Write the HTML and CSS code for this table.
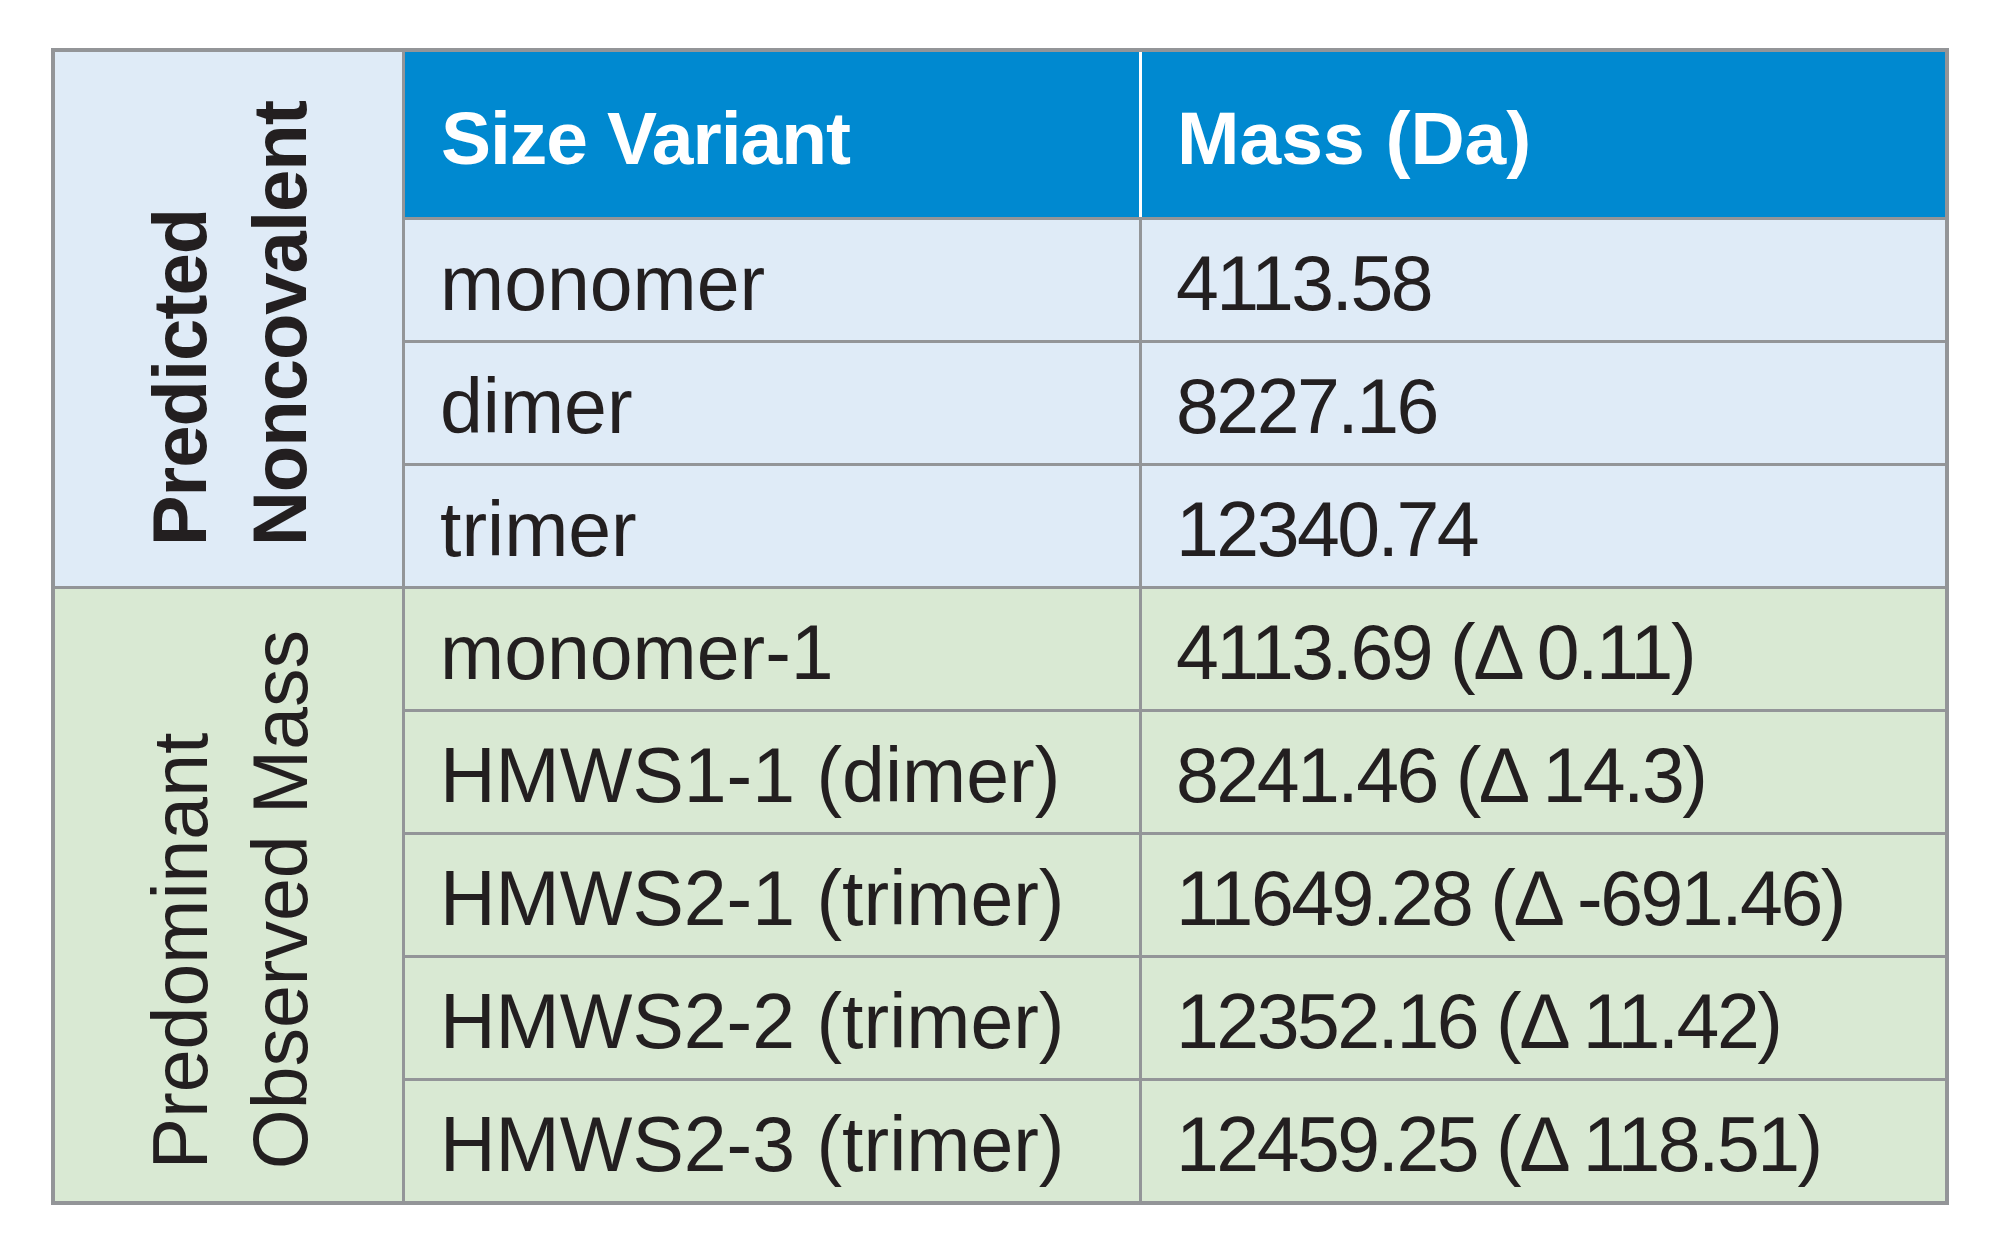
FILE: index.html
```html
<!DOCTYPE html>
<html lang="en">
<head>
<meta charset="utf-8">
<title>Size Variants</title>
<link rel="stylesheet" href="styles.css">
</head>
<body>
<div class="table">
  <div class="group group-pred"><div class="vlabel bold">Predicted<br>Noncovalent</div></div>
  <div class="group group-obs"><div class="vlabel">Predominant<br>Observed Mass</div></div>

  <div class="hcell">Size Variant</div>
  <div class="hcell hcell-mass">Mass (Da)</div>

  <div class="cell blue">monomer</div>
  <div class="cell blue num">4113.58</div>
  <div class="cell blue">dimer</div>
  <div class="cell blue num">8227.16</div>
  <div class="cell blue">trimer</div>
  <div class="cell blue num">12340.74</div>

  <div class="cell green">monomer-1</div>
  <div class="cell green num">4113.69 (Δ 0.11)</div>
  <div class="cell green">HMWS1-1 (dimer)</div>
  <div class="cell green num">8241.46 (Δ 14.3)</div>
  <div class="cell green">HMWS2-1 (trimer)</div>
  <div class="cell green num">11649.28 (Δ -691.46)</div>
  <div class="cell green">HMWS2-2 (trimer)</div>
  <div class="cell green num">12352.16 (Δ 11.42)</div>
  <div class="cell green">HMWS2-3 (trimer)</div>
  <div class="cell green num">12459.25 (Δ 118.51)</div>
</div>
</body>
</html>
```
FILE: styles.css
```css
html, body {
  margin: 0;
  padding: 0;
  background: #ffffff;
}

body {
  font-family: "Liberation Sans", Arial, sans-serif;
  color: #231f20;
  padding: 48px 0 0 51px;
}

.table {
  display: grid;
  grid-template-columns: 347px 734px 803px;
  grid-template-rows: 165px repeat(8, 120px);
  gap: 3px;
  width: 1890px;
  background: #939598;
  border: 4px solid #939598;
}

.group {
  grid-column: 1;
  display: flex;
  align-items: center;
  justify-content: center;
  padding-top: 10px;
}

.group-pred {
  grid-row: 1 / span 4;
  background: #dfebf7;
}

.group-obs {
  grid-row: 5 / span 5;
  background: #d9e9d3;
}

.vlabel {
  writing-mode: vertical-rl;
  transform: rotate(180deg);
  font-size: 77px;
  line-height: 100px;
  text-align: start;
  white-space: nowrap;
  margin-left: 2px;
}

.bold {
  font-weight: bold;
  font-size: 76px;
  letter-spacing: -1px;
}

.hcell {
  background: #0089d0;
  color: #ffffff;
  font-weight: bold;
  font-size: 75px;
  letter-spacing: -1px;
  display: flex;
  align-items: center;
  padding: 6px 0 0 36px;
}

.hcell-mass {
  box-shadow: -3px 0 0 #ffffff;
  padding-left: 35px;
  letter-spacing: 0;
}

.cell {
  font-size: 77px;
  display: flex;
  align-items: center;
  padding: 6px 0 0 35px;
  white-space: nowrap;
}

.cell.num {
  padding-left: 34px;
  letter-spacing: -2.5px;
}

.blue {
  background: #dfebf7;
}

.green {
  background: #d9e9d3;
}
```
